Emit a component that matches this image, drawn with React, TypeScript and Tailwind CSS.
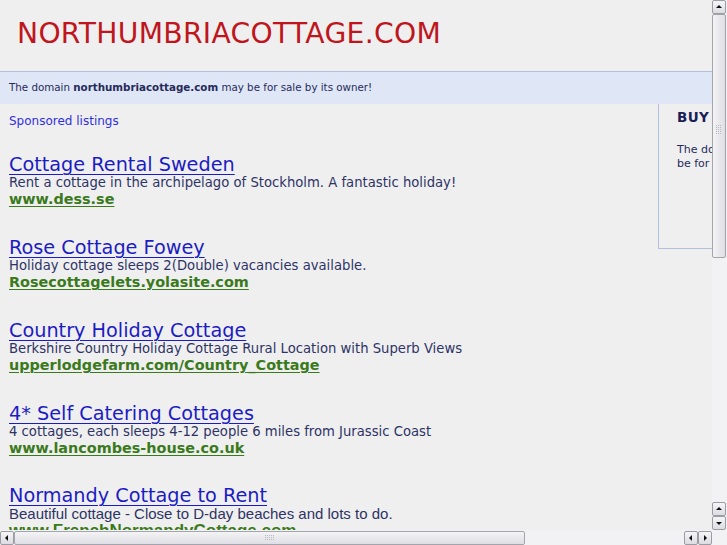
import React from "react";

const listings = [
  { t: "Cottage Rental Sweden", d: "Rent a cottage in the archipelago of Stockholm. A fantastic holiday!", u: "www.dess.se" },
  { t: "Rose Cottage Fowey", d: "Holiday cottage sleeps 2(Double) vacancies available.", u: "Rosecottagelets.yolasite.com" },
  { t: "Country Holiday Cottage", d: "Berkshire Country Holiday Cottage Rural Location with Superb Views", u: "upperlodgefarm.com/Country_Cottage" },
  { t: "4* Self Catering Cottages", d: "4 cottages, each sleeps 4-12 people 6 miles from Jurassic Coast", u: "www.lancombes-house.co.uk" },
];

function Grip({ vertical }: { vertical?: boolean }) {
  const dots = [];
  const cols = vertical ? 3 : 5;
  const rows = vertical ? 5 : 3;
  for (let r = 0; r < rows; r++)
    for (let c = 0; c < cols; c++)
      dots.push(<rect key={r + "-" + c} x={c * 2} y={r * 2} width="1" height="1" fill="#b8b8c0" />);
  return (
    <svg width={cols * 2} height={rows * 2}>
      {dots}
    </svg>
  );
}

function Arrow({ dir }: { dir: "up" | "down" | "left" | "right" }) {
  const p =
    dir === "up" ? "M1 5 L4 2 L7 5 Z" : dir === "down" ? "M1 3 L4 6 L7 3 Z" : dir === "left" ? "M5 1 L2 4 L5 7 Z" : "M3 1 L6 4 L3 7 Z";
  return (
    <svg width="8" height="8" viewBox="0 0 8 8">
      <path d={p} fill="#111" />
    </svg>
  );
}

function Btn({ dir }: { dir: "up" | "down" | "left" | "right" }) {
  return (
    <div className="w-[14px] h-[14px] flex items-center justify-center border border-[#9c9ca4] rounded-[2px] bg-gradient-to-b from-[#f6f6f8] to-[#dcdce2]">
      <Arrow dir={dir} />
    </div>
  );
}

export default function App() {
  return (
    <div className="w-[727px] h-[545px] overflow-hidden flex bg-[#efefef]" style={{ fontFamily: '"DejaVu Sans", Verdana, sans-serif' }}>
      <div className="w-[712px] h-[545px] flex flex-col">
        <div className="w-[712px] h-[530px] overflow-hidden">
          <div className="w-[935px]">
            <div className="h-[71px] pl-[17px] pt-[15px]">
              <div className="text-[28.2px] leading-[38px] text-[#bf161d] tracking-[0.3px]">NORTHUMBRIACOTTAGE.COM</div>
            </div>
            <div className="h-[33px] bg-[#dfe6f5] border-t border-[#b0c2e0] pl-[9px] flex items-center text-[10.3px] text-[#262b5c]">
              <span>
                The domain <b>northumbriacottage.com</b> may be for sale by its owner!
              </span>
            </div>
            <div className="flex">
              <div className="w-[658px] pl-[9px]">
                <div className="pt-[9px] text-[12px] leading-[16px] text-[#3030e0]">Sponsored listings</div>
                <div className="pt-[24px]">
                  {listings.map((l) => (
                    <div key={l.t} className="h-[83px]">
                      <div className="text-[19.25px] leading-[24px] text-[#1c1cc4] underline decoration-1 underline-offset-[3px]">{l.t}</div>
                      <div className="text-[13.2px] leading-[17px] text-[#2e3366] -mt-[3px]">{l.d}</div>
                      <div className="text-[14.4px] leading-[17px] font-bold text-[#3a7a1c] underline decoration-1 underline-offset-[2px]">{l.u}</div>
                    </div>
                  ))}
                  <div className="h-[83px] -mt-[1px]">
                    <div className="text-[19.25px] leading-[24px] text-[#1c1cc4] underline decoration-1 underline-offset-[3px]">Normandy Cottage to Rent</div>
                    <div className="text-[15px] leading-[17px] text-[#2e3366] -mt-[3px]" style={{ fontFamily: '"Liberation Sans", Arial, sans-serif' }}>
                      Beautiful cottage - Close to D-day beaches and lots to do.
                    </div>
                    <div className="text-[17px] leading-[17px] font-bold text-[#3a7a1c] underline decoration-1" style={{ fontFamily: '"Liberation Sans", Arial, sans-serif' }}>
                      www.FrenchNormandyCottage.com
                    </div>
                  </div>
                </div>
              </div>
              <div className="w-[277px] h-[145px] border-l border-b border-[#b0c2e0] pl-[18px] pt-[4px]">
                <div className="text-[13.5px] font-bold text-[#1a1f58] leading-[18px] tracking-[0.4px]">BUY THIS DOMAIN</div>
                <div className="mt-[17px] text-[11px] leading-[14px] text-[#262b5c]">
                  The domain northumbriacottage.com may
                  <br />
                  be for sale by its owner!
                </div>
              </div>
            </div>
          </div>
        </div>
        {/* horizontal scrollbar */}
        <div className="h-[15px] flex items-center bg-[#f2f2f4]">
          <Btn dir="left" />
          <div className="w-[511px] h-[14px] border border-[#a4a4ac] rounded-[2px] bg-gradient-to-b from-[#f4f4f6] to-[#dedee4] flex items-center justify-center">
            <Grip />
          </div>
          <div className="flex-1 h-[14px]" />
          <Btn dir="left" />
          <Btn dir="right" />
        </div>
      </div>
      {/* vertical scrollbar */}
      <div className="w-[15px] h-[545px] flex flex-col bg-[#f2f2f4]">
        <Btn dir="up" />
        <div className="h-[244px] w-[14px] border border-[#a4a4ac] rounded-[2px] bg-gradient-to-r from-[#f4f4f6] to-[#dedee4] flex flex-col items-center">
          <div className="mt-[110px]">
            <Grip vertical />
          </div>
        </div>
        <div className="flex-1" />
        <Btn dir="up" />
        <Btn dir="down" />
        <div className="h-[15px]" />
      </div>
    </div>
  );
}
